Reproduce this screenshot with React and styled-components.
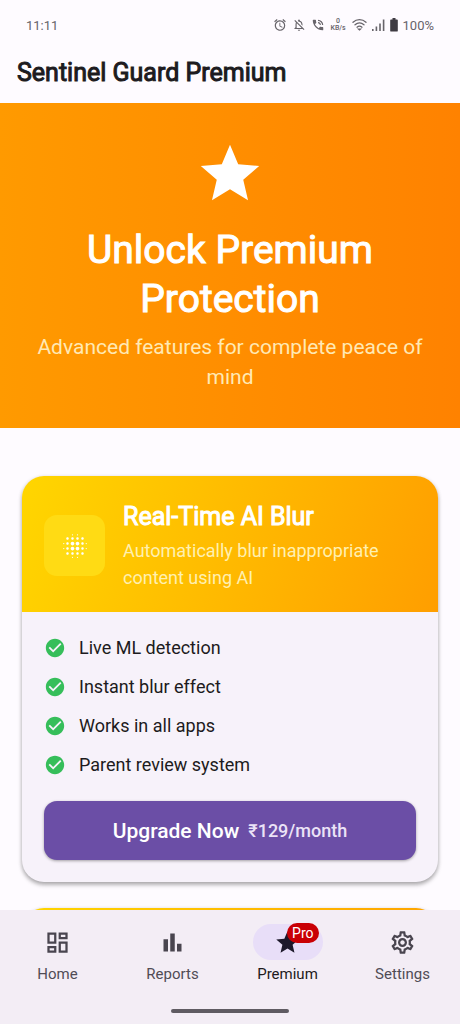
import React from "react";
import styled, { createGlobalStyle } from "styled-components";
import {
  MdAlarm,
  MdBlurOn,
  MdCheckCircle,
  MdOutlineDashboard,
  MdOutlineNotificationsOff,
  MdOutlineSettings,
  MdPhoneInTalk,
  MdStar,
} from "react-icons/md";

const GlobalStyle = createGlobalStyle`
  * { box-sizing: border-box; }
  body {
    margin: 0;
    background: #fefbff;
    color: #1d1b20;
    font-family: Roboto, "Noto Sans", sans-serif;
  }
  h1, h2, p, ul { margin: 0; padding: 0; }
  ul { list-style: none; }
  svg { display: block; flex: none; }
`;

const Screen = styled.div`
  height: 100vh;
  display: flex;
  flex-direction: column;
`;

const StatusBar = styled.div`
  flex: none;
  display: flex;
  align-items: center;
  justify-content: space-between;
  height: 50px;
  padding: 0 26px;
  font-size: 13px;
  color: #67646a;
`;

const StatusIcons = styled.div`
  display: flex;
  align-items: center;
  gap: 5px;
`;

const NetSpeed = styled.div`
  display: flex;
  flex-direction: column;
  align-items: center;
  width: 17px;
  font-size: 7px;
  line-height: 7px;
  font-weight: 500;
`;

const AppBar = styled.header`
  flex: none;
  height: 53px;
  padding: 7px 17px 0;
`;

const AppTitle = styled.h1`
  font-size: 25px;
  line-height: 32px;
  font-weight: 400;
  -webkit-text-stroke: 1px currentColor;
`;

const Content = styled.main`
  flex: 1;
  min-height: 0;
  overflow: hidden;
`;

const Hero = styled.section`
  display: flex;
  flex-direction: column;
  align-items: center;
  padding: 36px;
  text-align: center;
  color: #fff;
  background: linear-gradient(to right, #ff9a00, #ff8200);
`;

const HeroTitle = styled.h2`
  margin-top: 17px;
  font-size: 39px;
  line-height: 49px;
  font-weight: 400;
  -webkit-text-stroke: 1px currentColor;
`;

const HeroText = styled.p`
  margin-top: 8px;
  font-size: 21px;
  line-height: 30px;
  color: #ffe9b4;
`;

const Cards = styled.div`
  display: flex;
  flex-direction: column;
  gap: 26px;
  padding: 48px 22px;
`;

const Card = styled.article`
  border-radius: 22px;
  background: #f7f2fa;
  overflow: hidden;
  box-shadow: 0 3px 4px rgba(0, 0, 0, 0.26), 0 1px 4px rgba(0, 0, 0, 0.14);
`;

const CardHeader = styled.div`
  display: flex;
  align-items: center;
  gap: 18px;
  min-height: 136px;
  padding: 24px 22px 21px;
  background: linear-gradient(108deg, #ffd600, #ff9e00);
`;

const IconTile = styled.div`
  flex: none;
  display: grid;
  place-items: center;
  width: 61px;
  height: 61px;
  border-radius: 13px;
  color: #fff;
  background: #ffdb14;
`;

const CardTitle = styled.h2`
  font-size: 25px;
  line-height: 34px;
  font-weight: 400;
  color: #fff;
  -webkit-text-stroke: 1px currentColor;
`;

const CardText = styled.p`
  margin-top: 3px;
  font-size: 18px;
  line-height: 27px;
  color: #fff0b0;
`;

const CardBody = styled.div`
  padding: 22px;
`;

const Features = styled.ul`
  display: flex;
  flex-direction: column;
  gap: 12px;
`;

const Feature = styled.li`
  display: flex;
  align-items: center;
  gap: 13px;
  font-size: 18px;
  line-height: 27px;

  svg { color: #36be5a; }
`;

const UpgradeButton = styled.button`
  display: flex;
  align-items: center;
  justify-content: center;
  gap: 9px;
  width: 100%;
  height: 59px;
  margin-top: 23px;
  border: 0;
  border-radius: 13px;
  background: #6b4ea6;
  color: #fff;
  font: 500 21px Roboto, "Noto Sans", sans-serif;
  box-shadow: 0 1px 3px rgba(0, 0, 0, 0.35);
`;

const Price = styled.span`
  font-size: 18px;
  color: #ebe3f7;
`;

const NavBar = styled.nav`
  flex: none;
  height: 114px;
  background: #f3edf5;
`;

const NavItems = styled.div`
  display: grid;
  grid-template-columns: repeat(4, 1fr);
  height: 99px;
  padding-top: 14px;
`;

const NavItem = styled.a`
  display: flex;
  flex-direction: column;
  align-items: center;
  gap: 4px;
  font-size: 15px;
  line-height: 20px;
  text-decoration: none;
  color: ${(p) => (p.$active ? "#1d1b20" : "#504c55")};
`;

const NavIcon = styled.span`
  position: relative;
  display: grid;
  place-items: center;
  width: 70px;
  height: 36px;
  border-radius: 18px;
  color: ${(p) => (p.$active ? "#1d192b" : "#49454f")};
  background: ${(p) => (p.$active ? "#e8def8" : "transparent")};
`;

const Badge = styled.span`
  position: absolute;
  top: -1px;
  right: 4px;
  padding: 0 5px;
  border-radius: 10px;
  background: #c90005;
  color: #fff;
  font-size: 14px;
  line-height: 20px;
`;

const HomeIndicator = styled.div`
  width: 118px;
  height: 4px;
  margin: 0 auto;
  border-radius: 2px;
  background: #5f5b62;
`;

const WifiIcon = () => (
  <svg width="15" height="14" viewBox="0 0 15 14" fill="none" stroke="currentColor" strokeWidth="1.3" strokeLinecap="round">
    <path d="M1 4.2C4.8.8 10.2.8 14 4.2M3 6.8c2.7-2.3 6.3-2.3 9 0M5 9.2c1.5-1.2 3.5-1.2 5 0" />
    <path d="M6.6 11.2h1.8L7.5 12z" fill="currentColor" />
  </svg>
);

const SignalIcon = () => (
  <svg width="13" height="14" viewBox="0 0 13 14" fill="currentColor">
    <path d="M0 11h1.6v2H0zM3.6 8.5h1.6V13H3.6zM7.2 5.5h1.6V13H7.2zM10.8 1.5h1.6V13h-1.6z" />
  </svg>
);

const BatteryIcon = () => (
  <svg width="8" height="14" viewBox="0 0 8 14" fill="#3e3b42">
    <path d="M2.5 0h3v1.5H7a.8.8 0 0 1 .8.8v10.4a.9.9 0 0 1-.9.9H1.1a.9.9 0 0 1-.9-.9V2.3a.8.8 0 0 1 .8-.8h1.5z" />
  </svg>
);

const BarsIcon = ({ size }) => (
  <svg width={size} height={size} viewBox="0 0 24 24" fill="currentColor">
    <path d="M4 9h4v11H4zM16 13h4v7h-4zM10 4h4v16h-4z" />
  </svg>
);

const features = [
  "Live ML detection",
  "Instant blur effect",
  "Works in all apps",
  "Parent review system",
];

const tabs = [
  { label: "Home", Icon: MdOutlineDashboard },
  { label: "Reports", Icon: BarsIcon },
  { label: "Premium", Icon: MdStar, active: true, badge: "Pro" },
  { label: "Settings", Icon: MdOutlineSettings },
];

export default function App() {
  return (
    <Screen>
      <GlobalStyle />
      <StatusBar>
        <span>11:11</span>
        <StatusIcons>
          <MdAlarm size={14} />
          <MdOutlineNotificationsOff size={14} />
          <MdPhoneInTalk size={14} />
          <NetSpeed>
            <span>0</span>
            <span>KB/s</span>
          </NetSpeed>
          <WifiIcon />
          <SignalIcon />
          <BatteryIcon />
          <span>100%</span>
        </StatusIcons>
      </StatusBar>
      <AppBar>
        <AppTitle>Sentinel Guard Premium</AppTitle>
      </AppBar>
      <Content>
        <Hero>
          <MdStar size={70} />
          <HeroTitle>Unlock Premium Protection</HeroTitle>
          <HeroText>Advanced features for complete peace of mind</HeroText>
        </Hero>
        <Cards>
          <Card>
            <CardHeader>
              <IconTile>
                <MdBlurOn size={30} />
              </IconTile>
              <div>
                <CardTitle>Real-Time AI Blur</CardTitle>
                <CardText>Automatically blur inappropriate content using AI</CardText>
              </div>
            </CardHeader>
            <CardBody>
              <Features>
                {features.map((text) => (
                  <Feature key={text}>
                    <MdCheckCircle size={22} />
                    {text}
                  </Feature>
                ))}
              </Features>
              <UpgradeButton type="button">
                Upgrade Now <Price>₹129/month</Price>
              </UpgradeButton>
            </CardBody>
          </Card>
          <Card>
            <CardHeader />
          </Card>
        </Cards>
      </Content>
      <NavBar>
        <NavItems>
          {tabs.map(({ label, Icon, active, badge }) => (
            <NavItem key={label} href={`#${label.toLowerCase()}`} $active={active}>
              <NavIcon $active={active}>
                <Icon size={27} />
                {badge && <Badge>{badge}</Badge>}
              </NavIcon>
              {label}
            </NavItem>
          ))}
        </NavItems>
        <HomeIndicator />
      </NavBar>
    </Screen>
  );
}
